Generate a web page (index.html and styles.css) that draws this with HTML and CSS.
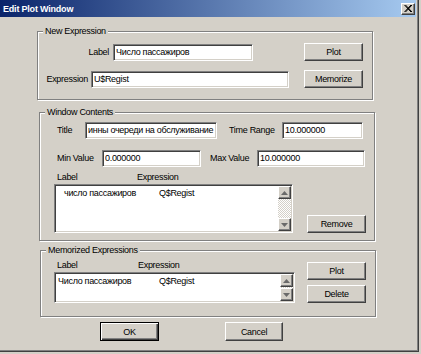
FILE: index.html
```html
<!DOCTYPE html>
<html lang="en">
<head>
    <meta charset="UTF-8">
    <meta name="viewport" content="width=device-width, initial-scale=1.0">
    <title>Edit Plot Window</title>
    <link rel="stylesheet" href="styles.css">
</head>
<body>
    <div class="window">
        <div class="titlebar">
            <span class="title">Edit Plot Window</span>
            <button class="close">
                <svg width="8" height="7" viewBox="0 0 8 7"><path d="M0.5 0L7 7M1.5 0L8 7M7 0L0.5 7M8 0L1.5 7" stroke="#000" stroke-width="1" fill="none"/></svg>
            </button>
        </div>

        <fieldset class="group group-new">
            <legend>New Expression</legend>
            <div class="row row-label">
                <label class="lbl lbl-label">Label</label>
                <input class="field w-label" type="text" value="Число пассажиров" readonly>
                <button class="btn btn-side">Plot</button>
            </div>
            <div class="row row-expr">
                <label class="lbl lbl-expr">Expression</label>
                <input class="field w-expr" type="text" value="U$Regist" readonly>
                <button class="btn btn-side">Memorize</button>
            </div>
        </fieldset>

        <fieldset class="group group-contents">
            <legend>Window Contents</legend>
            <div class="row row-title">
                <label class="lbl lbl-title">Title</label>
                <input class="field w-title" type="text" value="инны очереди на обслуживание" readonly>
                <label class="lbl lbl-range">Time Range</label>
                <input class="field w-range" type="text" value="10.000000" readonly>
            </div>
            <div class="row row-values">
                <label class="lbl lbl-min">Min Value</label>
                <input class="field w-min" type="text" value="0.000000" readonly>
                <label class="lbl lbl-max">Max Value</label>
                <input class="field w-max" type="text" value="10.000000" readonly>
            </div>
            <div class="headers headers-contents">
                <span class="head-label">Label</span>
                <span>Expression</span>
            </div>
            <div class="list-row">
                <div class="listbox list-contents">
                    <div class="items">
                        <div class="item item-indent">
                            <span class="cell-name">число пассажиров</span>
                            <span>Q$Regist</span>
                        </div>
                    </div>
                    <div class="scrollbar">
                        <div class="arrow">
                            <svg width="7" height="4" viewBox="0 0 7 4"><polygon points="3.5,0 7,4 0,4" fill="#6a6a6a"/></svg>
                        </div>
                        <div class="track"></div>
                        <div class="arrow">
                            <svg width="7" height="4" viewBox="0 0 7 4"><polygon points="0,0 7,0 3.5,4" fill="#6a6a6a"/></svg>
                        </div>
                    </div>
                </div>
                <button class="btn btn-remove">Remove</button>
            </div>
        </fieldset>

        <fieldset class="group group-memo">
            <legend>Memorized Expressions</legend>
            <div class="memo-body">
                <div class="memo-list">
                    <div class="headers headers-memo">
                        <span class="head-label">Label</span>
                        <span>Expression</span>
                    </div>
                    <div class="listbox list-memo">
                        <div class="items">
                            <div class="item">
                                <span class="cell-name">Число пассажиров</span>
                                <span>Q$Regist</span>
                            </div>
                        </div>
                        <div class="scrollbar">
                            <div class="arrow">
                                <svg width="7" height="4" viewBox="0 0 7 4"><polygon points="3.5,0 7,4 0,4" fill="#6a6a6a"/></svg>
                            </div>
                            <div class="track"></div>
                            <div class="arrow">
                                <svg width="7" height="4" viewBox="0 0 7 4"><polygon points="0,0 7,0 3.5,4" fill="#6a6a6a"/></svg>
                            </div>
                        </div>
                    </div>
                </div>
                <div class="memo-buttons">
                    <button class="btn btn-side">Plot</button>
                    <button class="btn btn-side">Delete</button>
                </div>
            </div>
        </fieldset>

        <div class="footer">
            <button class="btn btn-ok">OK</button>
            <button class="btn btn-cancel">Cancel</button>
        </div>
    </div>
</body>
</html>
```

FILE: styles.css
```css
* {
    margin: 0;
    padding: 0;
    box-sizing: border-box;
}

body {
    background-color: #d4d0c8;
    font-family: "Liberation Sans", Arial, sans-serif;
    font-size: 9px;
    letter-spacing: -0.3px;
    color: #000;
}

.window {
    width: 421px;
    height: 354px;
    padding-right: 5px;
    background-color: #d4d0c8;
    box-shadow: inset -2px -2px #d4d0c8, inset -3px -3px #404040, inset -4px -4px #808080;
}

/* title bar */
.titlebar {
    display: flex;
    align-items: center;
    justify-content: space-between;
    height: 17px;
    padding: 0 1px 0 3px;
    background: linear-gradient(to right, #0a246a, #a6caf0);
}

.title {
    color: #fff;
    font-weight: bold;
    letter-spacing: -0.2px;
}

.close {
    display: flex;
    align-items: center;
    justify-content: center;
    width: 14px;
    height: 12px;
    background-color: #d4d0c8;
    border: 1px solid;
    border-color: #fff #404040 #404040 #fff;
    box-shadow: inset -1px -1px #808080;
}

/* group boxes */
.group {
    width: 336px;
    min-width: 0;
    border: 1px solid #808080;
    box-shadow: 1px 1px #fff, inset 1px 1px #fff;
}

.group legend {
    margin-left: 5px;
    padding: 0 2px;
    line-height: 11px;
    background-color: #d4d0c8;
}

.group-new {
    height: 74px;
    margin: 9px 0 0 37px;
    padding-right: 9px;
}

.group-contents {
    height: 134px;
    margin: 7px 0 0 39px;
}

.group-memo {
    height: 72px;
    margin: 4px 0 0 40px;
}

/* rows */
.row {
    display: flex;
    align-items: center;
    height: 18px;
}

.row-label { margin-top: 6px; }
.row-expr { margin-top: 9px; }
.row-title { margin-top: 3px; padding-left: 17px; }
.row-values { margin-top: 10px; padding-left: 17px; }

.lbl {
    flex-shrink: 0;
    white-space: nowrap;
}

.lbl-label { width: 75px; text-align: right; padding-right: 4px; }
.lbl-expr { width: 53px; text-align: right; padding-right: 3px; }
.lbl-title { width: 28px; }
.lbl-range { width: 53px; margin-left: 12px; }
.lbl-min { width: 45px; }
.lbl-max { width: 47px; margin-left: 9px; }

/* text fields */
.field {
    height: 17px;
    padding: 0 2px;
    font-family: inherit;
    font-size: 9px;
    letter-spacing: -0.3px;
    color: #000;
    background-color: #fff;
    border: 1px solid;
    border-color: #808080 #fff #fff #808080;
    box-shadow: inset 1px 1px #404040, inset -1px -1px #d4d0c8;
    outline: none;
}

.w-label { width: 140px; }
.w-expr { width: 198px; }
.w-title { width: 132px; }
.w-range { width: 81px; }
.w-min { width: 99px; }
.w-max { width: 108px; }

/* buttons */
.btn {
    height: 18px;
    font-family: inherit;
    font-size: 9px;
    letter-spacing: -0.3px;
    color: #000;
    background-color: #d4d0c8;
    border: 1px solid;
    border-color: #fff #404040 #404040 #fff;
    box-shadow: inset -1px -1px #808080;
}

.btn-side {
    width: 59px;
    margin-left: auto;
}

.btn-remove {
    width: 59px;
    margin-left: 14px;
    align-self: flex-end;
}

/* list boxes */
.headers {
    display: flex;
    height: 12px;
    line-height: 12px;
}

.headers-contents {
    margin-top: 4px;
    padding-left: 17px;
}

.headers-memo {
    height: 13px;
    padding-left: 3px;
}

.head-label {
    width: 80px;
}

.headers-memo .head-label {
    width: 81px;
}

.list-row {
    display: flex;
    margin-top: 1px;
    padding-left: 14px;
}

.listbox {
    display: flex;
    background-color: #fff;
    border: 1px solid;
    border-color: #808080 #fff #fff #808080;
    box-shadow: inset 1px 1px #404040, inset -1px -1px #d4d0c8;
    padding: 2px 1px 1px 2px;
}

.list-contents {
    width: 239px;
    height: 49px;
}

.list-memo {
    width: 241px;
    height: 31px;
}

.items {
    flex: 1;
}

.item {
    display: flex;
    height: 12px;
    line-height: 12px;
    padding-left: 1px;
}

.item-indent {
    padding-left: 7px;
}

.cell-name {
    width: 101px;
}

.item-indent .cell-name {
    width: 95px;
}

.scrollbar {
    display: flex;
    flex-direction: column;
    width: 13px;
    margin-top: -1px;
}

.arrow {
    display: flex;
    align-items: center;
    justify-content: center;
    height: 13px;
    background-color: #d4d0c8;
    border: 1px solid;
    border-color: #fff #404040 #404040 #fff;
    box-shadow: inset -1px -1px #808080;
}

.track {
    flex: 1;
    background: repeating-conic-gradient(#d4d0c8 0 25%, #fff 0 50%) 0 0 / 2px 2px;
}

.memo-body {
    display: flex;
    margin-top: 3px;
    padding-left: 13px;
}

.memo-buttons {
    display: flex;
    flex-direction: column;
    gap: 5px;
    width: 59px;
    margin: 3px 0 0 12px;
}

/* footer */
.footer {
    display: flex;
    margin-top: 5px;
    padding-left: 100px;
}

.btn-ok {
    width: 59px;
    height: 19px;
    border: 1px solid #000;
    box-shadow: inset 1px 1px #fff, inset -1px -1px #404040, inset -2px -2px #808080;
}

.btn-cancel {
    width: 58px;
    height: 19px;
    margin-left: 66px;
}
```
